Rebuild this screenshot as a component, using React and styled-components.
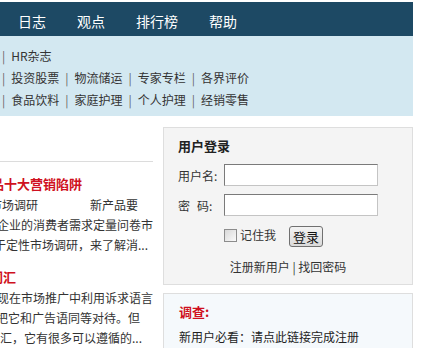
import React from 'react';
import styled, { createGlobalStyle } from 'styled-components';

const GlobalStyle = createGlobalStyle`
  body {
    margin: 0;
    background: #fff;
    font-family: "Noto Sans CJK SC", "Liberation Sans", sans-serif;
    font-size: 12px;
    color: #333;
  }
`;

const navItems = ['日志', '观点', '排行榜', '帮助'];

const subRows = [
  ['HR杂志'],
  ['投资股票', '物流储运', '专家专栏', '各界评价'],
  ['食品饮料', '家庭护理', '个人护理', '经销零售'],
];

const App = () => {
  return (
    <Page>
      <GlobalStyle />
      <Nav>
        {navItems.map((item) => (
          <NavLink key={item}>{item}</NavLink>
        ))}
      </Nav>
      <SubNav>
        {subRows.map((row, i) => (
          <SubRow key={i}>
            {row.map((item) => (
              <React.Fragment key={item}>
                <Sep>|</Sep>
                <SubLink>{item}</SubLink>
              </React.Fragment>
            ))}
          </SubRow>
        ))}
      </SubNav>
      <Main>
        <LeftCol>
          <TopRule />
          <Article>
            <Title $indent={-9}>品十大营销陷阱</Title>
            <Line $indent={-10}>
              市场调研<Tab $w={52}>新产品要</Tab>
            </Line>
            <Line $indent={-3}>企业的消费者需求定量问卷市</Line>
            <Line $indent={-6}>于定性市场调研，来了解消...</Line>
          </Article>
          <Article>
            <Title $indent={-10}>词汇</Title>
            <Line $indent={-3}>现在市场推广中利用诉求语言</Line>
            <Line $indent={-4}>把它和广告语同等对待。但</Line>
            <Line $indent={-12}>词汇，它有很多可以遵循的...</Line>
          </Article>
        </LeftCol>
        <RightCol>
          <LoginBox>
            <BoxTitle>用户登录</BoxTitle>
            <FieldRow>
              <Label>用户名:</Label>
              <Input />
            </FieldRow>
            <FieldRow>
              <Label>密<LabelGap />码:</Label>
              <Input type="password" />
            </FieldRow>
            <ActionRow>
              <CheckBox />
              <CheckText>记住我</CheckText>
              <LoginButton>登录</LoginButton>
            </ActionRow>
            <LinkRow>注册新用户 | 找回密码</LinkRow>
          </LoginBox>
          <NoticeBox>
            <NoticeTitle>调查:</NoticeTitle>
            <NoticeText>新用户必看：请点此链接完成注册</NoticeText>
          </NoticeBox>
        </RightCol>
      </Main>
    </Page>
  );
};

const Page = styled.div`
  width: 413px;
  padding-top: 2px;
`;

const Nav = styled.nav`
  height: 34px;
  box-sizing: border-box;
  padding: 4px 0 0 18px;
  background-color: #1d4964;
  display: flex;
  align-items: center;
  gap: 31px;
`;

const NavLink = styled.span`
  color: #fff;
  font-size: 14px;
  line-height: 20px;
`;

const SubNav = styled.div`
  height: 80px;
  box-sizing: border-box;
  padding-top: 9px;
  background-color: #d3e8f1;
`;

const SubRow = styled.div`
  display: flex;
  align-items: center;
  height: 22px;
  line-height: 22px;
  margin-left: -4px;
  white-space: nowrap;
`;

const Sep = styled.span`
  color: #666;
  margin: 0 6px;
`;

const SubLink = styled.span`
  color: #333;
`;

const Main = styled.div`
  display: flex;
  gap: 10px;
  align-items: flex-start;
`;

const LeftCol = styled.div`
  width: 153px;
  overflow: hidden;
`;

const TopRule = styled.div`
  height: 45px;
  border-bottom: 1px solid #dcdcdc;
`;

const Article = styled.div`
  padding-top: 12px;
  white-space: nowrap;
`;

const Title = styled.div`
  margin-left: ${(p) => p.$indent}px;
  margin-bottom: 1px;
  color: #cf1020;
  font-weight: bold;
  font-size: 13px;
  line-height: 20px;
`;

const Line = styled.div`
  margin-left: ${(p) => p.$indent}px;
  line-height: 20px;
  color: #333;
`;

const Tab = styled.span`
  margin-left: ${(p) => p.$w}px;
`;

const RightCol = styled.div`
  width: 250px;
  padding-top: 11px;
  display: flex;
  flex-direction: column;
  gap: 8px;
`;

const LoginBox = styled.div`
  border: 1px solid #dedede;
  background-color: #f4f4f4;
  padding: 8px 14px 7px;
`;

const BoxTitle = styled.div`
  font-weight: bold;
  font-size: 13px;
  line-height: 20px;
  color: #222;
  margin-bottom: 8px;
`;

const FieldRow = styled.div`
  display: flex;
  align-items: center;
  height: 22px;
  margin-bottom: 8px;
`;

const Label = styled.span`
  width: 46px;
  display: inline-flex;
  align-items: center;
  color: #333;
`;

const LabelGap = styled.span`
  display: inline-block;
  width: 7px;
`;

const Input = styled.input`
  width: 154px;
  height: 22px;
  box-sizing: border-box;
  margin: 0;
  padding: 0 3px;
  background: #fff;
  border: 1px solid;
  border-color: #7a7a7a #c4c4c4 #c4c4c4 #7a7a7a;
  outline: none;
`;

const ActionRow = styled.div`
  display: flex;
  align-items: center;
  height: 21px;
  margin: 10px 0 10px 46px;
`;

const CheckBox = styled.span`
  width: 11px;
  height: 11px;
  border: 1px solid #8c8c8c;
  background: linear-gradient(135deg, #d8d8d8, #fafafa);
  margin-top: -3px;
`;

const CheckText = styled.span`
  margin-left: 3px;
  line-height: 20px;
  margin-top: -4px;
`;

const LoginButton = styled.button`
  margin-left: 13px;
  width: 34px;
  height: 21px;
  padding: 0;
  font-family: inherit;
  font-size: 13px;
  line-height: 19px;
  color: #111;
  border: 1px solid #707070;
  border-radius: 3px;
  background: linear-gradient(#f3f3f3, #dadada);
  cursor: pointer;
`;

const LinkRow = styled.div`
  text-align: center;
  line-height: 20px;
  color: #333;
`;

const NoticeBox = styled.div`
  border: 1px solid #dedede;
  background-color: #f5f9fc;
  padding: 8px 15px 20px;
`;

const NoticeTitle = styled.div`
  color: #cf1020;
  font-weight: bold;
  font-size: 13px;
  line-height: 20px;
  margin-bottom: 5px;
`;

const NoticeText = styled.div`
  line-height: 20px;
  color: #222;
`;

export default App;
